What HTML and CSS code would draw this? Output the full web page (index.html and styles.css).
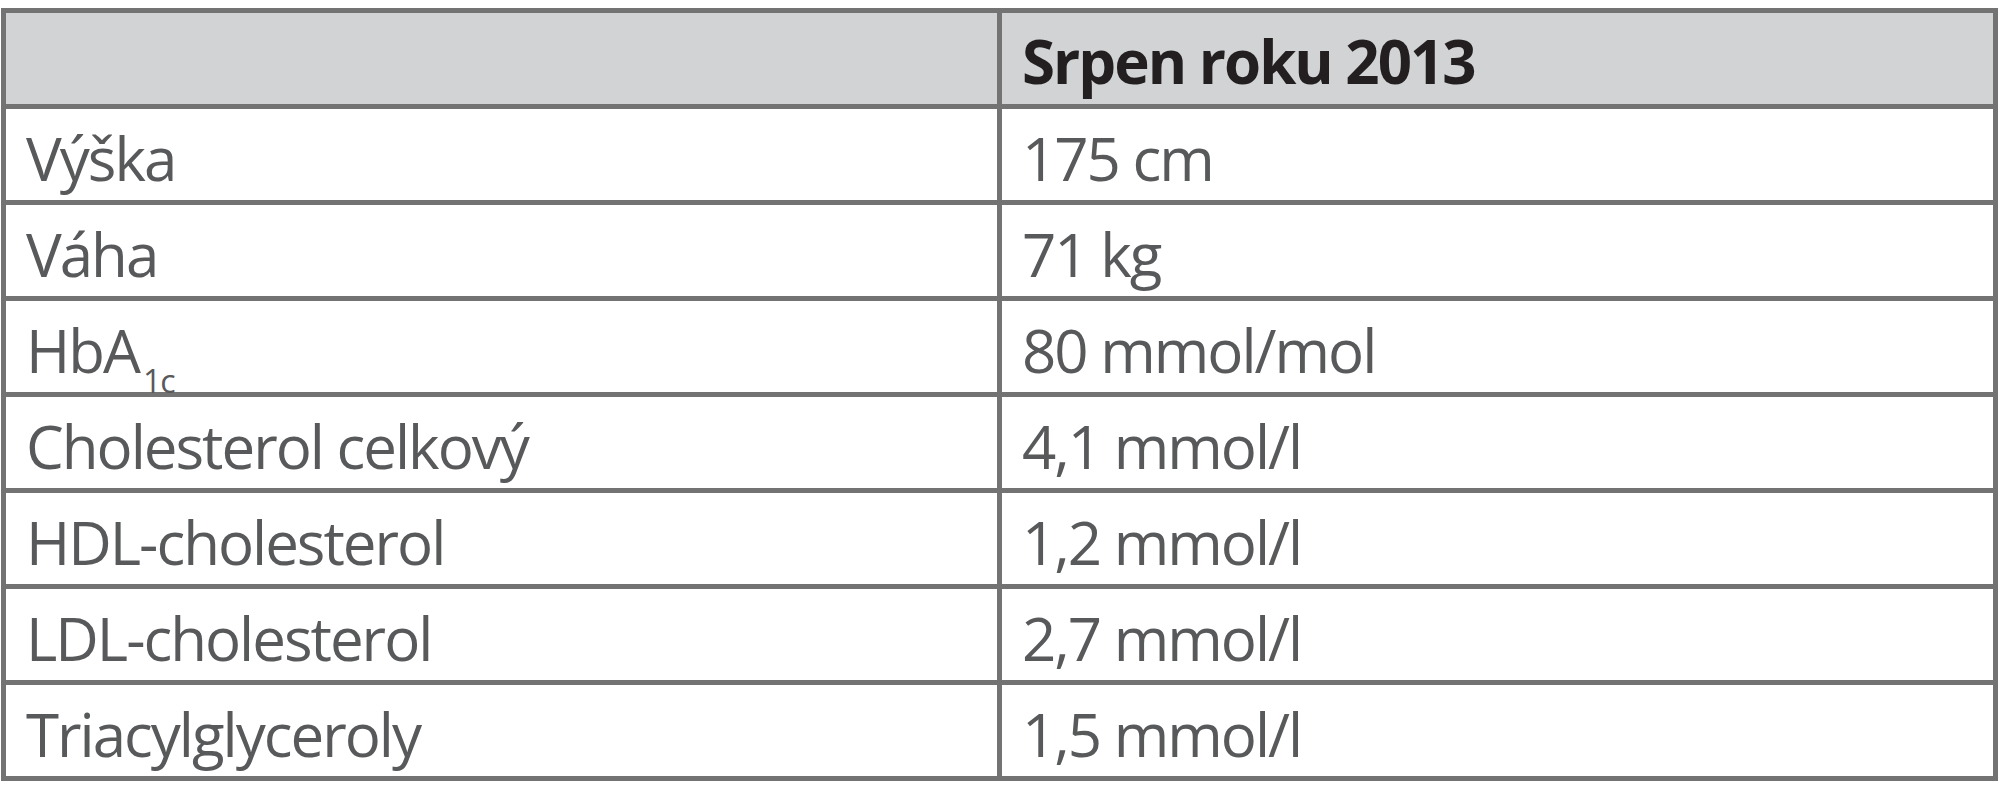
FILE: index.html
```html
<!DOCTYPE html>
<html lang="cs">
<head>
<meta charset="utf-8">
<title>Tabulka</title>
<link rel="stylesheet" href="styles.css">
</head>
<body>
<div class="grid">
  <div class="cell head"></div>
  <div class="cell head bold">Srpen roku 2013</div>
  <div class="cell">Výška</div>
  <div class="cell">175 cm</div>
  <div class="cell">Váha</div>
  <div class="cell">71 kg</div>
  <div class="cell">HbA<sub class="sub">1c</sub></div>
  <div class="cell">80 mmol/mol</div>
  <div class="cell">Cholesterol celkový</div>
  <div class="cell">4,1 mmol/l</div>
  <div class="cell">HDL-cholesterol</div>
  <div class="cell">1,2 mmol/l</div>
  <div class="cell">LDL-cholesterol</div>
  <div class="cell">2,7 mmol/l</div>
  <div class="cell">Triacylglyceroly</div>
  <div class="cell">1,5 mmol/l</div>
</div>
</body>
</html>
```
FILE: styles.css
```css
html, body {
  margin: 0;
  padding: 0;
  background: #ffffff;
}

.grid {
  display: grid;
  grid-template-columns: 996px 1fr;
  width: 1997px;
  margin: 8px 0 0 1px;
  box-sizing: border-box;
  border-top: 5px solid #737373;
  border-left: 5px solid #737373;
}

.cell {
  box-sizing: border-box;
  height: 96px;
  border-right: 5px solid #737373;
  border-bottom: 5px solid #737373;
  padding: 19px 0 0 20px;
  font-family: "Open Sans", "Noto Sans", sans-serif;
  font-size: 60px;
  line-height: 60px;
  letter-spacing: -2px;
  color: #58595b;
  white-space: nowrap;
}

.head {
  background: #d1d3d4;
  padding-top: 18px;
}

.bold {
  font-weight: 700;
  color: #231f20;
  letter-spacing: -2px;
}

.sub {
  font-size: 32px;
  line-height: 0;
  vertical-align: -20px;
  letter-spacing: -1px;
  margin-left: 4px;
}
```
